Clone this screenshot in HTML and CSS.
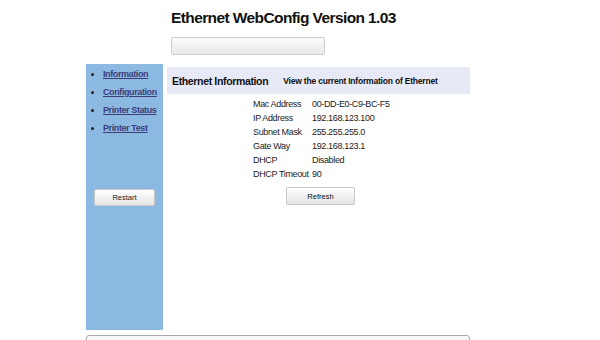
FILE: index.html
```html
<!DOCTYPE html>
<html lang="en">
<head>
    <meta charset="UTF-8">
    <title>Ethernet WebConfig</title>
    <link rel="stylesheet" href="styles.css">
</head>
<body>
    <div class="page">
        <header class="top">
            <h1>Ethernet WebConfig Version 1.03</h1>
            <div class="status-bar"></div>
        </header>

        <div class="main">
            <nav class="sidebar">
                <ul class="menu">
                    <li><a href="#">Information</a></li>
                    <li><a href="#">Configuration</a></li>
                    <li><a href="#">Printer Status</a></li>
                    <li><a href="#">Printer Test</a></li>
                </ul>
                <button class="btn btn-restart">Restart</button>
            </nav>

            <section class="content">
                <div class="panel-head">
                    <h2>Ethernet Information</h2>
                    <span class="panel-desc">View the current Information of Ethernet</span>
                </div>

                <div class="info">
                    <span class="label">Mac Address</span><span class="value">00-DD-E0-C9-BC-F5</span>
                    <span class="label">IP Address</span><span class="value">192.168.123.100</span>
                    <span class="label">Subnet Mask</span><span class="value">255.255.255.0</span>
                    <span class="label">Gate Way</span><span class="value">192.168.123.1</span>
                    <span class="label">DHCP</span><span class="value">Disabled</span>
                    <span class="label">DHCP Timeout</span><span class="value">90</span>
                </div>

                <button class="btn btn-refresh">Refresh</button>
            </section>
        </div>

        <div class="footer-bar"></div>
    </div>
</body>
</html>
```

FILE: styles.css
```css
* {
    margin: 0;
    padding: 0;
    box-sizing: border-box;
}

body {
    font-family: "Liberation Sans", Arial, sans-serif;
    background: #ffffff;
    color: #222222;
    overflow: hidden;
}

.page {
    width: 384px;
    margin-left: 86px;
}

.top {
    padding-left: 85px;
}

h1 {
    font-size: 15.5px;
    line-height: 20px;
    font-weight: bold;
    letter-spacing: -0.6px;
    padding-top: 8px;
    color: #111111;
}

.status-bar {
    width: 154px;
    height: 18px;
    margin-top: 9px;
    border: 1px solid #cfcfcf;
    border-radius: 2px;
    background: linear-gradient(#fbfbfb, #e9e9e9);
}

.main {
    display: flex;
    margin-top: 9px;
}

.sidebar {
    width: 77px;
    height: 266px;
    background: #8cb9e2;
    display: flex;
    flex-direction: column;
    align-items: flex-start;
}

.menu {
    padding: 1px 0 0 17px;
    list-style: disc;
    font-size: 9px;
    line-height: 18px;
    font-weight: bold;
    letter-spacing: -0.4px;
    color: #222222;
}

.menu a {
    color: #3d3d7a;
    text-decoration: underline;
}

.btn {
    font-family: "Liberation Sans", Arial, sans-serif;
    font-size: 7.5px;
    color: #222222;
    border: 1px solid #c9c9c9;
    border-radius: 2px;
    background: linear-gradient(#ffffff, #e4e4e4);
    cursor: pointer;
}

.btn-restart {
    width: 61px;
    height: 17px;
    margin: 52px 0 0 8px;
}

.content {
    flex: 1;
    margin-left: 4px;
}

.panel-head {
    display: flex;
    align-items: center;
    gap: 15px;
    height: 27px;
    margin-top: 3px;
    padding-left: 5px;
    background: #e7e9f6;
}

.panel-head h2 {
    font-size: 10.5px;
    font-weight: bold;
    letter-spacing: -0.35px;
    color: #111111;
}

.panel-desc {
    font-size: 8.5px;
    font-weight: bold;
    letter-spacing: -0.2px;
    color: #111111;
}

.info {
    display: grid;
    grid-template-columns: 59px auto;
    margin-top: 3px;
    padding-left: 86px;
    font-size: 9px;
    line-height: 14px;
    letter-spacing: -0.35px;
    color: #222222;
}

.btn-refresh {
    display: block;
    width: 69px;
    height: 18px;
    margin: 6px 0 0 119px;
    color: #111111;
}

.footer-bar {
    height: 20px;
    margin-top: 5px;
    border: 1px solid #a9a9a9;
    border-radius: 3px;
    background: linear-gradient(#fafafa, #ececec);
}
```
